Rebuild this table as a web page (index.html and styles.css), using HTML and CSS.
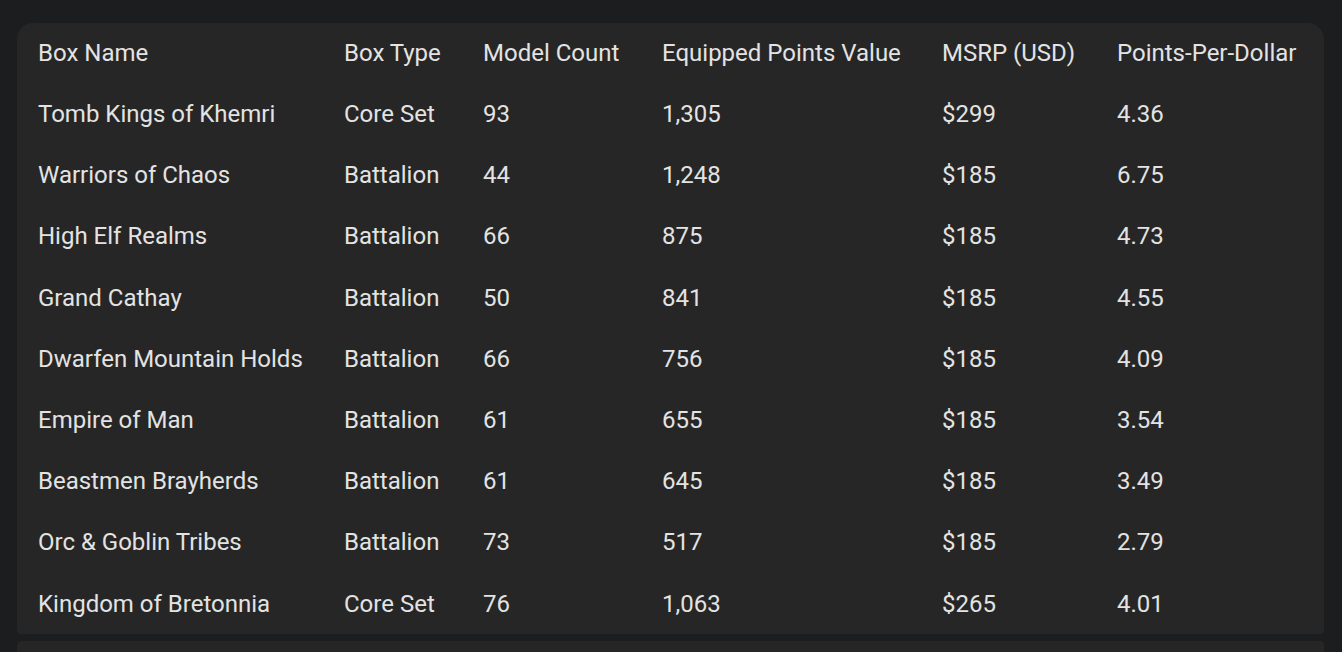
FILE: index.html
```html
<!DOCTYPE html>
<html lang="en">
<head>
<meta charset="utf-8">
<title>Box Comparison</title>
<link rel="stylesheet" href="styles.css">
</head>
<body>
<div class="page">
  <div class="card">
    <table class="boxes">
      <colgroup>
        <col class="c1"><col class="c2"><col class="c3"><col class="c4"><col class="c5"><col class="c6">
      </colgroup>
      <thead>
        <tr><th>Box Name</th><th>Box Type</th><th>Model Count</th><th>Equipped Points Value</th><th>MSRP (USD)</th><th>Points-Per-Dollar</th></tr>
      </thead>
      <tbody>
        <tr><td>Tomb Kings of Khemri</td><td>Core Set</td><td>93</td><td>1,305</td><td>$299</td><td>4.36</td></tr>
        <tr><td>Warriors of Chaos</td><td>Battalion</td><td>44</td><td>1,248</td><td>$185</td><td>6.75</td></tr>
        <tr><td>High Elf Realms</td><td>Battalion</td><td>66</td><td>875</td><td>$185</td><td>4.73</td></tr>
        <tr><td>Grand Cathay</td><td>Battalion</td><td>50</td><td>841</td><td>$185</td><td>4.55</td></tr>
        <tr><td>Dwarfen Mountain Holds</td><td>Battalion</td><td>66</td><td>756</td><td>$185</td><td>4.09</td></tr>
        <tr><td>Empire of Man</td><td>Battalion</td><td>61</td><td>655</td><td>$185</td><td>3.54</td></tr>
        <tr><td>Beastmen Brayherds</td><td>Battalion</td><td>61</td><td>645</td><td>$185</td><td>3.49</td></tr>
        <tr><td>Orc &amp; Goblin Tribes</td><td>Battalion</td><td>73</td><td>517</td><td>$185</td><td>2.79</td></tr>
        <tr><td>Kingdom of Bretonnia</td><td>Core Set</td><td>76</td><td>1,063</td><td>$265</td><td>4.01</td></tr>
      </tbody>
    </table>
  </div>
  <div class="card next"></div>
</div>
</body>
</html>
```

FILE: styles.css
```css
html, body {
  margin: 0;
  padding: 0;
  background: #1c1d1f;
}
body {
  font-family: Roboto, "Noto Sans", Arial, sans-serif;
  color: #e3e3e3;
  overflow: hidden;
}
.page {
  padding: 23px 18px 0 17px;
  display: flex;
  flex-direction: column;
  gap: 7px;
}
.card {
  background: #262626;
  border-radius: 16px 16px 4px 4px;
}
.card.next {
  height: 40px;
  border-radius: 4px 4px 0 0;
}
.boxes {
  width: 100%;
  border-collapse: collapse;
  table-layout: fixed;
}
.c1 { width: 306px; }
.c2 { width: 139px; }
.c3 { width: 179px; }
.c4 { width: 280px; }
.c5 { width: 175px; }
.c6 { width: 228px; }
.boxes th,
.boxes td {
  height: 61.2px;
  padding: 0 0 0 21px;
  text-align: left;
  font-size: 24px;
  font-weight: 400;
  white-space: nowrap;
  vertical-align: middle;
}
.boxes thead th { height: 60.5px; }
```
